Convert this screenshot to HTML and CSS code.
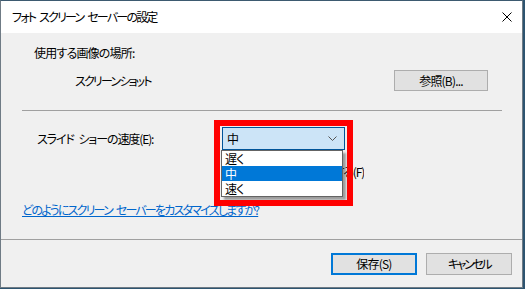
FILE: index.html
```html
<!DOCTYPE html>
<html lang="ja">
<head>
  <meta charset="UTF-8" />
  <title>フォト スクリーン セーバーの設定</title>
  <link rel="stylesheet" href="styles.css">
</head>
<body>

  <div class="window">
    <div class="titlebar">
      <span class="title kana">フォト スクリーン セーバーの設定</span>
      <svg class="close" width="10" height="10" viewBox="0 0 10 10">
        <path d="M0.5 0.5 L9.5 9.5 M9.5 0.5 L0.5 9.5" stroke="#000" stroke-width="1" fill="none" />
      </svg>
    </div>

    <div class="content">
      <div class="row-label">使用する画像の場所:</div>
      <div class="row-location">
        <span class="location kana">スクリーンショット</span>
        <button class="btn">参照(B)...</button>
      </div>

      <div class="separator"></div>

      <div class="row-speed">
        <span class="speed-label">スライド ショーの速度(E):</span>
        <div class="combo">
          <span class="combo-value">中</span>
          <svg class="chevron" width="9" height="5" viewBox="0 0 9 5">
            <path d="M0.5 0.5 L4.5 4.5 L8.5 0.5" stroke="#555" stroke-width="1" fill="none" />
          </svg>
          <ul class="combo-list">
            <li>遅く</li>
            <li class="selected">中</li>
            <li>速く</li>
          </ul>
          <div class="highlight"></div>
        </div>
      </div>

      <div class="row-shuffle">
        <label class="shuffle"><input type="checkbox" /><span>画像をシャッフルする(F)</span></label>
      </div>

      <a class="help-link kana" href="#">どのようにスクリーン セーバーをカスタマイズしますか?</a>
    </div>

    <div class="footer">
      <button class="btn btn-default">保存(S)</button>
      <button class="btn kana">キャンセル</button>
    </div>
  </div>

</body>
</html>
```

FILE: styles.css
```css
body {
  margin: 0;
  background-color: #2d5470;
  font-family: "Noto Sans CJK JP", sans-serif;
  font-size: 12px;
  font-feature-settings: "palt";
  letter-spacing: -0.8px;
  word-spacing: 3px;
  color: #000;
}

.kana {
  letter-spacing: -1.8px;
}

.window {
  width: 521px;
  height: 286px;
  border: 1px solid #6f7b85;
  border-top-color: #3d5a70;
  background-color: #f0f0f0;
  display: flex;
  flex-direction: column;
}

.titlebar {
  height: 32px;
  background-color: #fff;
  display: flex;
  align-items: center;
  padding: 0 10px 0 11px;
}

.title {
  flex: 1;
  line-height: 16px;
}

.content {
  flex: 1;
  padding-top: 12px;
}

.row-label {
  line-height: 16px;
  padding-left: 33px;
}

.row-location {
  display: flex;
  align-items: center;
  height: 21px;
  margin-top: 9px;
  padding: 0 34px 0 74px;
}

.location {
  flex: 1;
  line-height: 16px;
}

.btn {
  font-family: inherit;
  font-size: 12px;
  font-feature-settings: "palt";
  letter-spacing: -0.8px;
  color: #000;
  background-color: #e1e1e1;
  border: 1px solid #adadad;
  padding: 0;
  margin: 0;
  width: 94px;
  height: 21px;
  line-height: 16px;
}

.btn.kana {
  letter-spacing: -2.4px;
}

.separator {
  height: 1px;
  background-color: #a0a0a0;
  margin: 19px 20px 0 21px;
}

.row-speed {
  display: flex;
  align-items: center;
  margin-top: 16px;
  padding-left: 36px;
}

.speed-label {
  width: 185px;
  line-height: 16px;
  letter-spacing: -1.1px;
}

.combo {
  position: relative;
  width: 121px;
  height: 21px;
  border: 1px solid #005499;
  background-color: #cce4f7;
  display: flex;
  align-items: center;
}

.combo-value {
  flex: 1;
  padding-left: 4px;
  line-height: 16px;
}

.chevron {
  margin-right: 7px;
}

.combo-list {
  position: absolute;
  left: -2px;
  top: 22px;
  width: 120px;
  margin: 0;
  padding: 0;
  list-style: none;
  background-color: #fff;
  border: 1px solid #646464;
  box-shadow: 3px 3px 2px rgba(0, 0, 0, 0.35);
  z-index: 1;
}

.combo-list li {
  height: 15px;
  line-height: 15px;
  padding-left: 3px;
}

.combo-list li.selected {
  background-color: #0078d7;
  color: #fff;
}

.highlight {
  position: absolute;
  left: -9px;
  top: -8px;
  width: 127px;
  height: 74px;
  border: 6px solid #ff0000;
  z-index: 2;
}

.row-shuffle {
  margin-top: 14px;
  padding-left: 221px;
  height: 16px;
}

.shuffle {
  display: flex;
  justify-content: flex-end;
  align-items: center;
  width: 142px;
  white-space: nowrap;
  overflow: hidden;
  line-height: 16px;
  letter-spacing: -1.2px;
}

.shuffle input {
  margin: 0 4px 0 0;
  flex-shrink: 0;
}

.help-link {
  display: inline-block;
  align-self: flex-start;
  margin: 22px 0 0 21px;
  line-height: 16px;
  color: #0066cc;
  text-decoration: underline;
}

.footer {
  height: 34px;
  border-top: 1px solid #a0a0a0;
  display: flex;
  justify-content: flex-end;
  align-items: flex-start;
  gap: 9px;
  padding: 13px 10px 0 0;
}

.footer .btn {
  width: 86px;
  height: 22px;
}

.footer .btn-default {
  border: 2px solid #0078d7;
}
```
